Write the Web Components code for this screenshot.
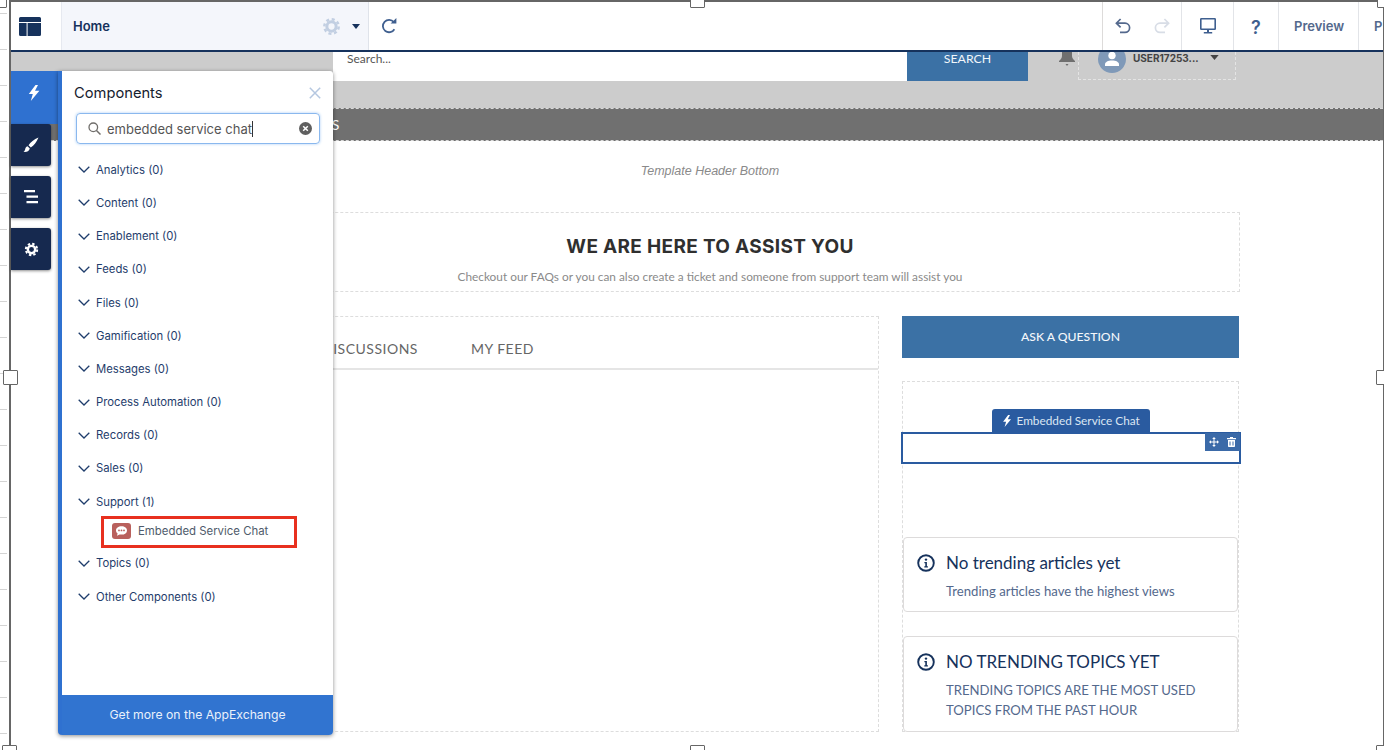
<!DOCTYPE html>
<html>
<head>
<meta charset="utf-8">
<title>Builder</title>
<style>
  html, body { margin: 0; padding: 0; background: #fff; }
  body { width: 1384px; height: 750px; overflow: hidden; font-family: "Lato", "Liberation Sans", sans-serif; }
</style>
</head>
<body>
<builder-page></builder-page>

<script>
const boltIcon = (size, color) => `<svg width="${size}" height="${size}" viewBox="0 0 12 16"><path fill="${color}" d="M7.500 0 .8 9h4L2.800 16 11.400 5.800H7L10 0z"/></svg>`
const gearIcon = (size, color) => `<svg width="${size}" height="${size}" viewBox="-10 -10 20 20"><circle r="4.900" fill="none" stroke="${color}" stroke-width="3.200"/><circle r="7.600" fill="none" stroke="${color}" stroke-width="2.600" stroke-dasharray="3.200 2.770"/></svg>`
const chevron = `<svg width="12" height="7" viewBox="0 0 12 7"><path d="M.7.8 6 6 11.300.8" fill="none" stroke="#1f3d6c" stroke-width="1.300"/></svg>`
const infoIcon = `<svg width="18" height="18" viewBox="0 0 18 18"><circle cx="9" cy="9" r="7.800" fill="none" stroke="#16325c" stroke-width="1.900"/><circle cx="9" cy="5.600" r="1.200" fill="#16325c"/><path d="M7.400 8h2.500v4.200h1v1.200H7.300v-1.200h1V9.200h-.9z" fill="#16325c"/></svg>`

class BuilderToolbar extends HTMLElement {
  constructor() {
    super()
    this.attachShadow({ mode: 'open' }).innerHTML = `
      <style>
        :host { display: flex; height: 48px; background: #fff; border-bottom: 2px solid #16325c; font-family: "Inter", "Liberation Sans", sans-serif; }
        .cell { display: flex; align-items: center; box-sizing: border-box; border-right: 1px solid #e2e4e8; flex: none; }
        .logo { width: 50px; justify-content: center; padding-right: 12px; border-right: 0; }
        .home { width: 308px; background: #f4f6fb; border-left: 1px solid #e6e9f0; border-right: 1px solid #dfe3ea; padding: 0 8px 0 11px; color: #16325c; font-weight: 600; font-size: 13px; }
        .home b { font-weight: 600; flex: 1; }
        .home svg:first-of-type { margin: 0 11px 0 -1px; }
        .redo { padding-left: 12px; flex: 1; border-right: 1px solid #dddbda; }
        .undo { width: 79px; gap: 23px; padding-left: 12px; }
        .screen { width: 52px; justify-content: center; }
        .help { width: 45px; justify-content: center; color: #3f5f8f; font-weight: 600; font-size: 18px; padding-top: 3px; }
        .link { width: 80px; padding-left: 15px; color: #54698d; font-weight: 600; font-size: 13px; }
        .last { width: 24px; border-right: 0; }
      </style>
      <div class="cell logo">
        <svg width="22" height="19" viewBox="0 0 22 19"><path fill="#16325c" d="M1.500 0h19A1.500 1.500 0 0 1 22 1.500V5H0V1.500A1.500 1.500 0 0 1 1.500 0zM0 6h7.600v13H1.500A1.500 1.500 0 0 1 0 17.500zM8.600 6H22v11.500a1.500 1.500 0 0 1-1.500 1.500H8.600z"/></svg>
      </div>
      <div class="cell home">
        <b>Home</b>
        ${gearIcon(19, '#c2cfe2')}
        <svg width="8" height="5" viewBox="0 0 8 5"><path fill="#16325c" d="M0 0h8L4 5z"/></svg>
      </div>
      <div class="cell redo">
        <svg width="17" height="17" viewBox="0 0 17 17"><path fill="none" stroke="#3f5f8f" stroke-width="1.800" d="M13.400 11.200A6.200 6.200 0 1 1 12.800 4"/><path fill="#3f5f8f" d="M9.600 5.600h5.800V0z"/></svg>
      </div>
      <div class="cell undo">
        <svg width="16" height="16" viewBox="0 0 16 16"><path fill="none" stroke="#54698d" stroke-width="1.700" d="M5.600 1 1.400 5.200l4.200 4.200M1.800 5.200h8.200a4.600 4.600 0 0 1 0 9.200H5"/></svg>
        <svg width="16" height="16" viewBox="0 0 16 16"><path fill="none" stroke="#d8dde6" stroke-width="1.700" d="M10.400 1l4.200 4.200-4.200 4.200M14.200 5.200H6a4.600 4.600 0 0 0 0 9.200h5"/></svg>
      </div>
      <div class="cell screen">
        <svg width="16" height="16" viewBox="0 0 16 16"><path fill="#3f5f8f" d="M1.300 0h13.400A1.300 1.300 0 0 1 16 1.300v9.400a1.300 1.300 0 0 1-1.300 1.300H1.300A1.300 1.300 0 0 1 0 10.700V1.300A1.300 1.300 0 0 1 1.300 0zm.3 1.600v8.800h12.800V1.600zM7 12h2v2.200H7zM3.800 14h8.400v1.600H3.800z"/></svg>
      </div>
      <div class="cell help">?</div>
      <div class="cell link">Preview</div>
      <div class="cell link last">P</div>
    `
  }
}
customElements.define('builder-toolbar', BuilderToolbar)

class SiteHeader extends HTMLElement {
  constructor() {
    super()
    this.attachShadow({ mode: 'open' }).innerHTML = `
      <style>
        :host { display: block; background: #ccc; height: 56px; overflow: hidden; }
        .row { display: flex; align-items: flex-start; padding-left: 322px; }
        .input { width: 574px; height: 29px; background: #fff; box-sizing: border-box; padding: 0 14px; color: #555; font-size: 12px; line-height: 14px; }
        .btn { width: 121px; height: 29px; background: #3b71a5; color: #f2f6fa; font-size: 12.300px; text-align: center; line-height: 14px; }
        .bell { margin: -2px 0 0 30px; height: 20px; }
        .user { display: flex; width: 158px; height: 28px; box-sizing: border-box; margin-left: 2px; border: 1px dashed #e4e4e4; border-top: 0; padding-left: 19px; }
        .avatar { width: 28px; height: 28px; margin-top: -7px; border-radius: 50%; background: #7f99b8; flex: none; display: flex; align-items: center; justify-content: center; }
        .name { margin-left: 7px; color: #444; font-family: "Inter", "Liberation Sans", sans-serif; font-size: 10px; font-weight: 700; line-height: 13px; white-space: nowrap; }
        .caret { margin: 3px 0 0 11px; }
        .caret svg { display: block; }
      </style>
      <div class="row">
        <div class="input">Search...</div>
        <div class="btn">SEARCH</div>
        <div class="bell"><svg width="18" height="20" viewBox="0 0 18 20"><path fill="#6f6f6f" d="M9-4c3.800 0 5 3 5 6v4c0 2 1 3 3 5v1H1V11c2-2 3-3 3-5V2C4-1 5.200-4 9-4zM7.500 14h3L9 16z"/></svg></div>
        <div class="user">
          <div class="avatar"><svg width="18" height="18" viewBox="0 0 18 18"><circle cx="9" cy="5.500" r="3.700" fill="#fff"/><path fill="#fff" d="M2 16v-1.500C2 12 5 10.500 9 10.500s7 1.500 7 4V16z"/></svg></div>
          <div class="name">USER17253...</div>
          <div class="caret"><svg width="9" height="5" viewBox="0 0 10 6"><path fill="#444" d="M0 0h10L5 6z"/></svg></div>
        </div>
      </div>
    `
  }
}
customElements.define('site-header', SiteHeader)

class SiteNav extends HTMLElement {
  constructor() {
    super()
    this.attachShadow({ mode: 'open' }).innerHTML = `
      <style>
        :host { display: block; height: 31px; background: #707070; border-top: 1px dashed #d8d8d8; border-bottom: 1px dashed #d8d8d8; color: #fff; font-size: 14px; line-height: 31px; padding-left: 278px; letter-spacing: .4px; }
      </style>
      <slot></slot>
    `
  }
}
customElements.define('site-nav', SiteNav)

class HeroSection extends HTMLElement {
  constructor() {
    super()
    this.attachShadow({ mode: 'open' }).innerHTML = `
      <style>
        :host { display: block; box-sizing: border-box; height: 80px; margin-top: 11px; border: 1px dashed #ddd; text-align: center; }
        h1 { margin: 22px 0 0; font: 700 19px/24px "Inter", "Liberation Sans", sans-serif; color: #2f2f2f; letter-spacing: .32px; }
        p { margin: 10px 0 0; font: 400 11.850px/16px "Lato", sans-serif; color: #8a8a8a; }
      </style>
      <h1><slot name="title"></slot></h1>
      <p><slot name="text"></slot></p>
    `
  }
}
customElements.define('hero-section', HeroSection)

class FeedTabs extends HTMLElement {
  constructor() {
    super()
    this.attachShadow({ mode: 'open' }).innerHTML = `
      <style>
        :host { display: block; box-sizing: border-box; width: 699px; height: 416px; flex: none; border-top: 1px dashed #ddd; border-right: 1px dashed #ddd; border-bottom: 1px dashed #ddd; }
        .tabs { display: flex; gap: 53px; height: 53px; box-sizing: border-box; padding: 23px 0 0 142px; border-bottom: 2px solid #e5e5e5; color: #666; font-size: 14px; line-height: 18px; letter-spacing: .5px; }
      </style>
      <div class="tabs"><span>DISCUSSIONS</span><span>MY FEED</span></div>
    `
  }
}
customElements.define('feed-tabs', FeedTabs)

class InfoCard extends HTMLElement {
  constructor() {
    super()
    this.attachShadow({ mode: 'open' }).innerHTML = `
      <style>
        :host { display: flex; box-sizing: border-box; padding: 14px 13px 0; gap: 11px; background: #fff; border: 1px solid #dddbdb; border-radius: 4px; }
        .icon { flex: none; padding-top: 2px; }
        .title { font-size: 17px; line-height: 22px; color: #16325c; }
        .body { margin-top: 7px; font-size: 13.150px; line-height: 20px; color: #54698d; }
      </style>
      <div class="icon">${infoIcon}</div>
      <div>
        <div class="title"><slot name="title"></slot></div>
        <div class="body"><slot name="body"></slot></div>
      </div>
    `
  }
}
customElements.define('info-card', InfoCard)

class ChatDrop extends HTMLElement {
  constructor() {
    super()
    this.attachShadow({ mode: 'open' }).innerHTML = `
      <style>
        :host { display: flex; flex-direction: column; align-items: center; padding-top: 27px; position: relative; }
        .label { display: flex; align-items: center; gap: 4px; box-sizing: border-box; width: 158px; height: 23px; padding-left: 9px; background: #2a5ba0; border-radius: 3px 3px 0 0; color: #dbe6f3; font-size: 11.800px; white-space: nowrap; }
        .box { box-sizing: border-box; width: 340px; height: 32px; margin: 0 -2px; background: #fff; border: 2px solid #2a5ba0; position: relative; flex: none; }
        .tools { position: absolute; top: -1px; right: -1px; width: 35px; height: 18px; display: flex; align-items: center; justify-content: center; gap: 8px; background: #3b6aa8; }
      </style>
      <div class="label">${boltIcon(12, '#fff')}<span>Embedded Service Chat</span></div>
      <div class="box">
        <div class="tools">
          <svg width="10" height="10" viewBox="0 0 10 10"><path fill="#fff" d="M5 0l1.800 2H5.500v2.500H8V3.200l2 1.800-2 1.800V5.500H5.500V8h1.300L5 10 3.200 8h1.300V5.500H2v1.300L0 5l2-1.800v1.300h2.500V2H3.200z"/></svg>
          <svg width="9" height="10" viewBox="0 0 9 10"><path fill="#fff" d="M3 0h3v1h3v1.200H0V1h3zM1 3h7v6.200a.8.8 0 0 1-.8.8H1.800a.8.8 0 0 1-.8-.8zm1.500 1.500v4h1v-4zm3 0v4h1v-4z"/></svg>
        </div>
      </div>
    `
  }
}
customElements.define('chat-drop', ChatDrop)

class PageBody extends HTMLElement {
  constructor() {
    super()
    this.attachShadow({ mode: 'open' }).innerHTML = `
      <style>
        :host { display: block; margin-left: 169px; width: 1060px; }
        .top { height: 60px; box-sizing: border-box; padding-top: 22px; text-align: center; font: italic 300 12.500px/16px "Liberation Sans", sans-serif; color: #8a8a8a; }
        .cols { display: flex; gap: 23px; margin-top: 24px; }
        .side { flex: none; width: 337px; }
        .ask { height: 42px; background: #3b71a5; color: #f4f7fb; font: 500 12.200px/42px "Lato", sans-serif; text-align: center; }
        .region { box-sizing: border-box; height: 351px; margin-top: 23px; border: 1px dashed #ddd; }
        .t1 { height: 75px; margin-top: 73px; }
        .t2 { height: 96px; margin-top: 24px; }
      </style>
      <div class="top">Template Header Bottom</div>
      <hero-section>
        <span slot="title">WE ARE HERE TO ASSIST YOU</span>
        <span slot="text">Checkout our FAQs or you can also create a ticket and someone from support team will assist you</span>
      </hero-section>
      <div class="cols">
        <feed-tabs></feed-tabs>
        <div class="side">
          <div class="ask">ASK A QUESTION</div>
          <div class="region">
            <chat-drop></chat-drop>
            <info-card class="t1">
              <span slot="title">No trending articles yet</span>
              <span slot="body">Trending articles have the highest views</span>
            </info-card>
            <info-card class="t2">
              <span slot="title">NO TRENDING TOPICS YET</span>
              <span slot="body">TRENDING TOPICS ARE THE MOST USED TOPICS FROM THE PAST HOUR</span>
            </info-card>
          </div>
        </div>
      </div>
    `
  }
}
customElements.define('page-body', PageBody)

class PanelRow extends HTMLElement {
  constructor() {
    super()
    this.attachShadow({ mode: 'open' }).innerHTML = `
      <style>
        :host { display: flex; align-items: center; gap: 6px; height: 33.200px; padding-left: 16px; color: #1f3d6c; font-size: 11.300px; }
      </style>
      ${chevron}<slot></slot>
    `
  }
}
customElements.define('panel-row', PanelRow)

class ComponentPanel extends HTMLElement {
  constructor() {
    super()
    this.attachShadow({ mode: 'open' }).innerHTML = `
      <style>
        :host { position: absolute; left: 58px; top: 71px; width: 275px; height: 664px; box-sizing: border-box; display: flex; flex-direction: column; background: #fff; border-left: 4px solid #2f71d0; border-radius: 0 3px 4px 4px; box-shadow: 0 1px 4px rgba(0,0,0,.45); font-family: "Inter", "Liberation Sans", sans-serif; }
        .head { display: flex; justify-content: space-between; align-items: center; height: 41px; padding: 1px 12px 0 12px; color: #16212e; font-size: 14.700px; }
        .search { display: flex; align-items: center; box-sizing: border-box; width: 244px; height: 31px; margin-left: 14px; padding: 0 7px 0 11px; border: 1px solid #8ab8ee; border-radius: 4px; box-shadow: 0 0 3px #a9cdf5; color: #555; font-size: 13px; }
        .search span { flex: 1; margin-left: 6px; }
        .search i { display: inline-block; width: 1px; height: 16px; background: #333; vertical-align: -3px; }
        .list { flex: 1; padding-top: 9.200px; }
        .hit { display: flex; align-items: center; gap: 7px; box-sizing: border-box; width: 196px; height: 32px; margin: -2.400px 0 -1px 39px; padding: 0 0 2px 8px; border: 3px solid #e8301f; color: #4f5b6b; font-size: 11.400px; }
        .foot { height: 40px; background: #3174d0; color: #eaf1fb; font-size: 12.200px; text-align: center; line-height: 40px; border-radius: 0 0 4px 0; }
      </style>
      <div class="head">
        <span>Components</span>
        <svg width="12" height="12" viewBox="0 0 12 12"><path d="M.8.8l10.400 10.400M11.200.8.800 11.200" stroke="#b5c7e0" stroke-width="1.500"/></svg>
      </div>
      <div class="search">
        <svg width="13" height="13" viewBox="0 0 13 13"><circle cx="5.300" cy="5.300" r="4.300" fill="none" stroke="#706e6b" stroke-width="1.300"/><path d="M8.500 8.500l4 4" stroke="#706e6b" stroke-width="1.500"/></svg>
        <span>embedded service chat<i></i></span>
        <svg width="13" height="13" viewBox="0 0 13 13"><circle cx="6.500" cy="6.500" r="6.500" fill="#5f5f5f"/><path d="M4.200 4.200l4.600 4.600M8.800 4.200 4.200 8.800" stroke="#fff" stroke-width="1.500"/></svg>
      </div>
      <div class="list">
        <panel-row>Analytics (0)</panel-row>
        <panel-row>Content (0)</panel-row>
        <panel-row>Enablement (0)</panel-row>
        <panel-row>Feeds (0)</panel-row>
        <panel-row>Files (0)</panel-row>
        <panel-row>Gamification (0)</panel-row>
        <panel-row>Messages (0)</panel-row>
        <panel-row>Process Automation (0)</panel-row>
        <panel-row>Records (0)</panel-row>
        <panel-row>Sales (0)</panel-row>
        <panel-row>Support (1)</panel-row>
        <div class="hit">
          <svg width="19" height="16" viewBox="0 0 19 16"><rect width="19" height="16" rx="3" fill="#b9605c"/><path fill="#fff" d="M9.500 3.200c3.200 0 5.500 1.800 5.500 4.200s-2.300 4.200-5.500 4.200c-.7 0-1.300-.1-1.900-.2L5 12.800l.6-2.400C4.600 9.600 4 8.600 4 7.400 4 5 6.300 3.200 9.500 3.200z"/><g fill="#b9605c"><circle cx="7" cy="7.400" r=".9"/><circle cx="9.500" cy="7.400" r=".9"/><circle cx="12" cy="7.400" r=".9"/></g></svg>
          <span>Embedded Service Chat</span>
        </div>
        <panel-row>Topics (0)</panel-row>
        <panel-row>Other Components (0)</panel-row>
      </div>
      <div class="foot">Get more on the AppExchange</div>
    `
  }
}
customElements.define('component-panel', ComponentPanel)

class SideRail extends HTMLElement {
  constructor() {
    super()
    this.attachShadow({ mode: 'open' }).innerHTML = `
      <style>
        :host { position: absolute; left: 11px; top: 71px; width: 47px; display: flex; flex-direction: column; gap: 10px; }
        .on { height: 53px; margin-bottom: -10px; background: #2f71d0; display: flex; align-items: center; justify-content: center; padding: 0 2px 9px 0; box-sizing: border-box; }
        .btn { width: 40px; height: 42px; background: #16294f; border-radius: 0 3px 3px 0; box-shadow: 0 1px 3px rgba(0,0,0,.45); display: flex; align-items: center; justify-content: center; }
      </style>
      <div class="on">${boltIcon(16, '#fff')}</div>
      <div class="btn"><svg width="16" height="16" viewBox="0 0 16 16"><path fill="#fff" d="M15.500.500C11 2.500 7.500 5 5.500 8.200l2.300 2.300C11 8.500 13.500 5 15.500.500zM4.500 9.200C2.800 9.500 2.500 11 2.200 12.300 2 13.500 1.300 14.200.500 14.800c2.500.5 5.700-.3 6.300-3.300z"/></svg></div>
      <div class="btn"><svg width="14" height="14" viewBox="0 0 14 14"><path fill="#fff" d="M0 0h11v2.200H0zM2.500 5.500H14v2.200H2.500zM2.500 11H14v2.200H2.500z"/></svg></div>
      <div class="btn">${gearIcon(15, '#fff')}</div>
    `
  }
}
customElements.define('side-rail', SideRail)

class ResizeHandles extends HTMLElement {
  constructor() {
    super()
    this.attachShadow({ mode: 'open' }).innerHTML = `
      <style>
        i { position: absolute; box-sizing: border-box; width: 15px; height: 15px; background: #fff; border: 1px solid #666; border-radius: 1px; }
      </style>
      <i style="left:-8px;top:-7px"></i>
      <i style="left:690px;top:-7px"></i>
      <i style="left:1377px;top:-7px"></i>
      <i style="left:3px;top:370px"></i>
      <i style="left:1376px;top:370px"></i>
      <i style="left:2px;top:745px"></i>
      <i style="left:690px;top:745px"></i>
      <i style="left:1376px;top:745px"></i>
    `
  }
}
customElements.define('resize-handles', ResizeHandles)

class BuilderPage extends HTMLElement {
  constructor() {
    super()
    this.attachShadow({ mode: 'open' }).innerHTML = `
      <style>
        :host { display: flex; position: relative; width: 1384px; height: 750px; overflow: hidden; }
        .ruler { flex: none; width: 9px; background: repeating-linear-gradient(#fff 0 6px, #d4d4d4 6px 7px, #fff 7px 36px) 0 7px / 7px 100% no-repeat; }
        .frame { flex: 1; min-width: 0; border: 2px solid #666; border-width: 2px 1px 0 2px; overflow: hidden; }
      </style>
      <div class="ruler"></div>
      <div class="frame">
        <builder-toolbar></builder-toolbar>
        <site-header></site-header>
        <site-nav>TOPICS</site-nav>
        <page-body></page-body>
      </div>
      <side-rail></side-rail>
      <component-panel></component-panel>
      <resize-handles></resize-handles>
    `
  }
}
customElements.define('builder-page', BuilderPage)
</script>
</body>
</html>
